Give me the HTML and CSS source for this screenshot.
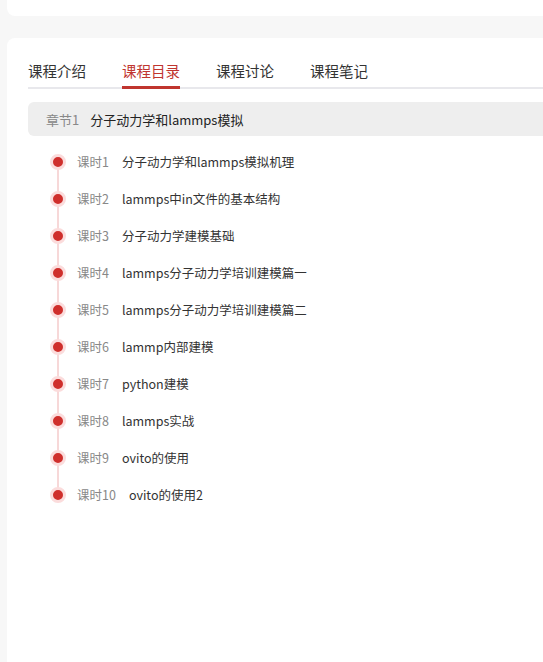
FILE: index.html
```html
<!DOCTYPE html>
<html lang="zh">
<head>
<meta charset="utf-8">
<link rel="stylesheet" href="styles.css">
</head>
<body>
<div class="top-card"></div>
<div class="main-card">
  <div class="tabs">
    <div class="tab">课程介绍</div>
    <div class="tab active">课程目录</div>
    <div class="tab">课程讨论</div>
    <div class="tab">课程笔记</div>
  </div>
  <div class="chapter">
    <span class="chapter-label">章节1</span>
    <span class="chapter-title">分子动力学和lammps模拟</span>
  </div>
  <ul class="lessons">
    <li class="lesson"><span class="dot"></span><span class="lesson-label">课时1</span><span class="lesson-title">分子动力学和lammps模拟机理</span></li>
    <li class="lesson"><span class="dot"></span><span class="lesson-label">课时2</span><span class="lesson-title">lammps中in文件的基本结构</span></li>
    <li class="lesson"><span class="dot"></span><span class="lesson-label">课时3</span><span class="lesson-title">分子动力学建模基础</span></li>
    <li class="lesson"><span class="dot"></span><span class="lesson-label">课时4</span><span class="lesson-title">lammps分子动力学培训建模篇一</span></li>
    <li class="lesson"><span class="dot"></span><span class="lesson-label">课时5</span><span class="lesson-title">lammps分子动力学培训建模篇二</span></li>
    <li class="lesson"><span class="dot"></span><span class="lesson-label">课时6</span><span class="lesson-title">lammp内部建模</span></li>
    <li class="lesson"><span class="dot"></span><span class="lesson-label">课时7</span><span class="lesson-title">python建模</span></li>
    <li class="lesson"><span class="dot"></span><span class="lesson-label">课时8</span><span class="lesson-title">lammps实战</span></li>
    <li class="lesson"><span class="dot"></span><span class="lesson-label">课时9</span><span class="lesson-title">ovito的使用</span></li>
    <li class="lesson"><span class="dot"></span><span class="lesson-label">课时10</span><span class="lesson-title">ovito的使用2</span></li>
  </ul>
</div>
</body>
</html>
```
FILE: styles.css
```css
html, body {
  margin: 0;
  padding: 0;
}
body {
  background: #f7f7f7;
  font-family: "Noto Sans CJK SC", "Noto Sans", sans-serif;
  color: #333;
  min-height: 662px;
}
.top-card {
  margin-left: 7px;
  height: 16px;
  background: #fff;
  border-radius: 0 0 0 8px;
}
.main-card {
  margin-top: 22px;
  margin-left: 7px;
  background: #fff;
  border-top-left-radius: 8px;
  min-height: 624px;
  padding: 22px 0 0 21px;
  box-sizing: border-box;
}
.tabs {
  display: flex;
  gap: 36px;
  border-bottom: 2px solid #e8e8ec;
}
.tab {
  font-size: 14.5px;
  line-height: 22px;
  padding-bottom: 5px;
  margin-bottom: -2px;
  color: #333;
  border-bottom: 2px solid transparent;
}
.tab.active {
  color: #c0352f;
  border-bottom: 3px solid #c0352f;
  padding-bottom: 4px;
}
.chapter {
  margin-top: 13px;
  height: 34px;
  background: #eeeeee;
  border-radius: 6px 0 0 6px;
  display: flex;
  align-items: center;
  padding-left: 18px;
  font-size: 13px;
}
.chapter-label {
  color: #888;
  margin-right: 11px;
}
.chapter-title {
  color: #222;
}
.lessons {
  list-style: none;
  margin: 7px 0 0;
  padding: 0;
}
.lesson {
  position: relative;
  height: 37px;
  display: flex;
  align-items: center;
  padding-left: 22px;
  font-size: 12.5px;
}
.lesson::before {
  content: "";
  position: absolute;
  left: 29px;
  top: 0;
  bottom: 0;
  width: 2px;
  background: #f7d8d8;
}
.lesson:first-child::before {
  top: 50%;
}
.lesson:last-child::before {
  bottom: 50%;
}
.dot {
  position: relative;
  width: 10px;
  height: 10px;
  border-radius: 50%;
  background: #cf2f2c;
  border: 3px solid #fbdcdc;
  flex: none;
}
.lesson-label {
  color: #888;
  margin-left: 11px;
  margin-right: 13px;
}
.lesson-title {
  color: #333;
}
```
